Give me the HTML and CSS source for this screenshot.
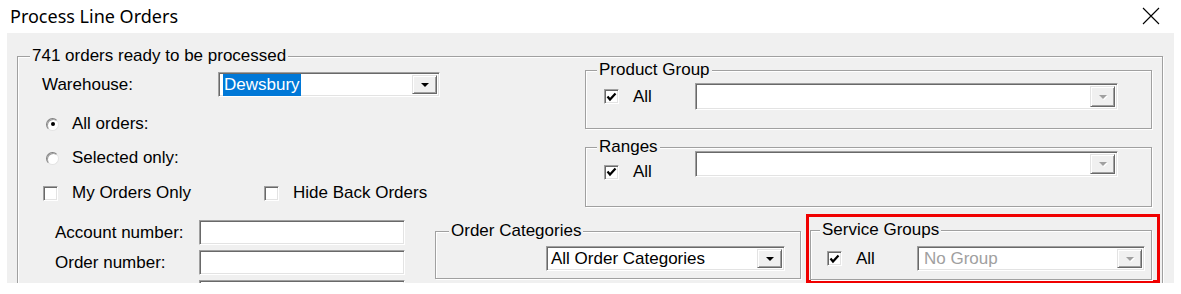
FILE: index.html
```html
<!DOCTYPE html>
<html lang="en">
<head>
    <meta charset="UTF-8">
    <title>Process Line Orders</title>
    <link rel="stylesheet" href="styles.css">
</head>
<body>
    <div class="titlebar">
        <span class="title">Process Line Orders</span>
        <svg class="close" width="18" height="18" viewBox="0 0 18 18">
            <path d="M1 1L17 17M17 1L1 17" stroke="#000" stroke-width="1.1" fill="none"/>
        </svg>
    </div>

    <div class="panel">
        <fieldset class="group main">
            <legend>741 orders ready to be processed</legend>

            <div class="top">
                <div class="left">
                    <div class="warehouse">
                        <span>Warehouse:</span>
                        <div class="combo wh-combo">
                            <span class="value"><span class="sel">Dewsbury</span></span>
                            <span class="btn"><i class="arrow"></i></span>
                        </div>
                    </div>

                    <div class="option first">
                        <span class="radio checked"></span>
                        <span>All orders:</span>
                    </div>
                    <div class="option">
                        <span class="radio"></span>
                        <span>Selected only:</span>
                    </div>

                    <div class="checks">
                        <div class="check-item mine">
                            <span class="checkbox"></span>
                            <span>My Orders Only</span>
                        </div>
                        <div class="check-item">
                            <span class="checkbox"></span>
                            <span>Hide Back Orders</span>
                        </div>
                    </div>
                </div>

                <div class="right">
                    <fieldset class="group product">
                        <legend>Product Group</legend>
                        <div class="filter">
                            <div class="check-item">
                                <span class="checkbox checked"><svg width="11" height="10" viewBox="0 0 11 10"><path d="M1.5 4.5L4 7.5L9.5 1.5" stroke="#000" stroke-width="2.2" fill="none"/></svg></span>
                                <span>All</span>
                            </div>
                            <div class="combo wide">
                                <span class="value"></span>
                                <span class="btn disabled"><i class="arrow"></i></span>
                            </div>
                        </div>
                    </fieldset>

                    <fieldset class="group ranges">
                        <legend>Ranges</legend>
                        <div class="filter">
                            <div class="check-item">
                                <span class="checkbox checked"><svg width="11" height="10" viewBox="0 0 11 10"><path d="M1.5 4.5L4 7.5L9.5 1.5" stroke="#000" stroke-width="2.2" fill="none"/></svg></span>
                                <span>All</span>
                            </div>
                            <div class="combo wide">
                                <span class="value"></span>
                                <span class="btn disabled"><i class="arrow"></i></span>
                            </div>
                        </div>
                    </fieldset>
                </div>
            </div>

            <div class="bottom">
                <div class="fields">
                    <span>Account number:</span>
                    <span class="textbox"></span>
                    <span>Order number:</span>
                    <span class="textbox"></span>
                    <span>Orders available:</span>
                    <span class="textbox"></span>
                </div>

                <fieldset class="group categories">
                    <legend>Order Categories</legend>
                    <div class="combo cat-combo">
                        <span class="value">All Order Categories</span>
                        <span class="btn"><i class="arrow"></i></span>
                    </div>
                </fieldset>

                <div class="highlight">
                    <fieldset class="group service">
                        <legend>Service Groups</legend>
                        <div class="filter">
                            <div class="check-item">
                                <span class="checkbox checked"><svg width="11" height="10" viewBox="0 0 11 10"><path d="M1.5 4.5L4 7.5L9.5 1.5" stroke="#000" stroke-width="2.2" fill="none"/></svg></span>
                                <span>All</span>
                            </div>
                            <div class="combo svc-combo">
                                <span class="value muted">No Group</span>
                                <span class="btn disabled"><i class="arrow"></i></span>
                            </div>
                        </div>
                    </fieldset>
                </div>
            </div>
        </fieldset>
    </div>
</body>
</html>
```

FILE: styles.css
```css
/* General styling */
body, html {
    margin: 0;
    padding: 0;
    background-color: #fff;
    font-family: "Liberation Sans", Arial, sans-serif;
    font-size: 17px;
    color: #000;
}

/* Title bar */
.titlebar {
    height: 33px;
    display: flex;
    align-items: center;
    justify-content: space-between;
    padding: 0 21px 2px 10px;
    box-sizing: border-box;
}

.title {
    font-family: "Noto Sans", sans-serif;
    font-size: 18px;
}

/* Dialog panel */
.panel {
    margin: 0 7px;
    height: 250px;
    padding-top: 17px;
    box-sizing: border-box;
    background-color: #f0f0f0;
    overflow: hidden;
}

/* Group boxes */
.group {
    margin: 0;
    padding: 0;
    min-inline-size: 0;
    border: 1px solid #a0a0a0;
    box-shadow: inset 1px 1px 0 #fff, 1px 1px 0 #fff;
}

.group legend {
    padding: 0 2px;
    line-height: 16px;
    background-color: #f0f0f0;
}

.main {
    margin-left: 10px;
    width: 1146px;
    box-sizing: border-box;
    height: 300px;
}

.main > legend {
    margin-left: 12px;
    line-height: 12px;
}

.top {
    display: grid;
    grid-template-columns: 567px 567px;
}

/* Left column */
.left {
    padding-left: 24px;
}

.warehouse {
    display: flex;
    align-items: center;
    margin-top: 10px;
}

.warehouse > span {
    width: 176px;
}

.option {
    display: flex;
    align-items: center;
    height: 16px;
    margin-top: 19px;
    padding-left: 4px;
    gap: 13px;
}

.option + .option {
    margin-top: 18px;
}

.checks {
    display: flex;
    margin-top: 19px;
    padding-left: 1px;
}

.check-item {
    display: flex;
    align-items: center;
    gap: 14px;
    height: 16px;
}

.mine {
    width: 221px;
}

/* Right column */
.product legend, .ranges legend {
    margin-left: -7px;
}

.product {
    padding: 5px 0 18px 18px;
}

.ranges {
    margin-top: 10px;
    padding: 0 0 26px 18px;
}

.filter {
    display: flex;
    align-items: center;
}

.product .check-item {
    width: 91px;
}

.ranges .filter {
    align-items: flex-start;
}

.ranges .check-item {
    width: 91px;
    margin-top: 9px;
}

.ranges .combo {
    margin-top: -4px;
    height: 26px;
}

/* Bottom row */
.bottom {
    display: flex;
    align-items: flex-start;
}

.fields {
    width: 417px;
    box-sizing: border-box;
    padding-left: 37px;
    margin-top: 13px;
    display: grid;
    grid-template-columns: 144px 206px;
    grid-auto-rows: 25px;
    row-gap: 5px;
    align-items: center;
}

.categories {
    width: 366px;
    box-sizing: border-box;
    margin-top: 16px;
    padding: 7px 0 7px 110px;
}

.categories legend {
    margin-left: -97px;
}

.highlight {
    margin: 7px 0 0 5px;
    width: 354px;
    box-sizing: border-box;
    border: 3px solid #f00000;
    padding: 5px 5px 0 1px;
}

.service {
    padding: 8px 0 8px 16px;
}

.service legend {
    margin-left: -7px;
}

.service .check-item {
    width: 90px;
}

/* Controls */
.combo {
    display: flex;
    align-items: stretch;
    height: 25px;
    box-sizing: border-box;
    background-color: #fff;
    border: 1px solid;
    border-color: #a0a0a0 #fff #fff #a0a0a0;
    box-shadow: inset 1px 1px 0 #696969, inset -1px -1px 0 #e3e3e3;
    padding: 2px 2px 2px 3px;
}

.combo .value {
    flex: 1;
    display: flex;
    align-items: center;
    padding-left: 1px;
    white-space: nowrap;
}

.sel {
    background-color: #0078d7;
    color: #fff;
    padding: 1px 1px;
}

.muted {
    color: #a0a0a0;
}

.btn {
    width: 25px;
    box-sizing: border-box;
    background-color: #f0f0f0;
    border: 1px solid;
    border-color: #e3e3e3 #696969 #696969 #e3e3e3;
    box-shadow: inset 1px 1px 0 #fff, inset -1px -1px 0 #a0a0a0;
    display: flex;
    align-items: center;
    justify-content: center;
}

.arrow {
    width: 0;
    height: 0;
    border-left: 4px solid transparent;
    border-right: 4px solid transparent;
    border-top: 4px solid #000;
}

.btn.disabled .arrow {
    border-top-color: #a0a0a0;
    filter: drop-shadow(1px 1px 0 #fff);
}

.wh-combo {
    width: 222px;
}

.wide {
    width: 423px;
    height: 27px;
}

.cat-combo {
    width: 239px;
}

.cat-combo .value {
    padding-left: 1px;
}

.svc-combo {
    width: 228px;
}

.svc-combo .value {
    padding-left: 3px;
}

.textbox {
    height: 25px;
    box-sizing: border-box;
    background-color: #fff;
    border: 1px solid;
    border-color: #a0a0a0 #fff #fff #a0a0a0;
    box-shadow: inset 1px 1px 0 #696969, inset -1px -1px 0 #e3e3e3;
}

.checkbox {
    width: 15px;
    height: 15px;
    box-sizing: border-box;
    flex: none;
    background-color: #fff;
    border: 1px solid;
    border-color: #a0a0a0 #fff #fff #a0a0a0;
    box-shadow: inset 1px 1px 0 #696969, inset -1px -1px 0 #e3e3e3;
    display: flex;
    align-items: center;
    justify-content: center;
}

.radio {
    width: 13px;
    height: 13px;
    box-sizing: border-box;
    flex: none;
    border-radius: 50%;
    background-color: #fff;
    border: 1px solid;
    border-color: #808080 #e3e3e3 #e3e3e3 #808080;
    box-shadow: inset 1px 1px 0 #a0a0a0;
    position: relative;
}

.radio.checked::after {
    content: "";
    position: absolute;
    left: 3.5px;
    top: 3.5px;
    width: 4px;
    height: 4px;
    border-radius: 50%;
    background-color: #000;
}
```
